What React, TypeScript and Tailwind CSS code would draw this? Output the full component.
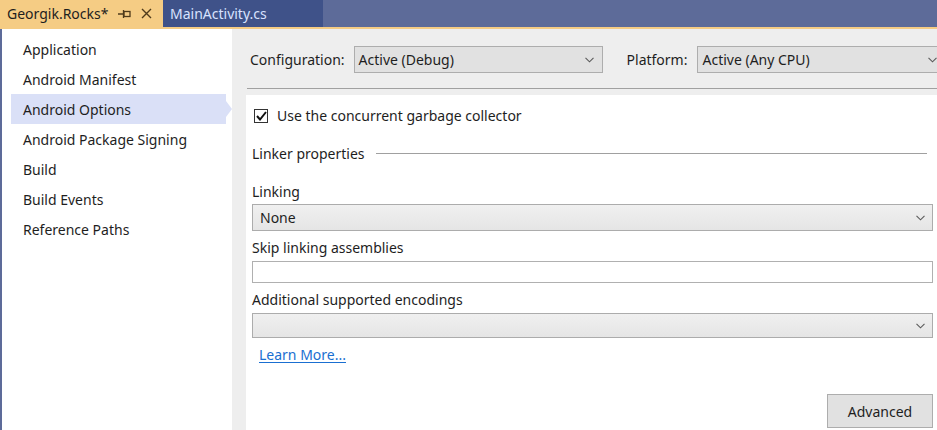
const navItems = [
    'Application',
    'Android Manifest',
    'Android Options',
    'Android Package Signing',
    'Build',
    'Build Events',
    'Reference Paths',
];

function Chevron() {
    return (
        <svg width="9" height="6" viewBox="0 0 9 6">
            <path d="M0.5 0.8 L4.5 4.8 L8.5 0.8" fill="none" stroke="#5a5a5a" strokeWidth="1.1" />
        </svg>
    );
}

export default function App() {
    return (
        <div
            className="flex h-[430px] w-[937px] flex-col overflow-hidden bg-white text-[14px] text-[#1e1e1e]"
            style={{ fontFamily: '"Noto Sans", "Open Sans", sans-serif' }}
        >
            {/* tab strip */}
            <div className="flex h-[27px] shrink-0 bg-[#5d6b99]">
                <div className="flex w-[163px] items-center bg-[#f5cc84] pl-[7px] text-[#1e1e1e]">
                    <span className="pb-[1px]">Georgik.Rocks*</span>
                    <svg width="14" height="10" viewBox="0 0 14 10" className="ml-[10px]">
                        <path d="M0 5 H5 M5.5 1 V9" stroke="#4f3b1b" strokeWidth="1.3" fill="none" />
                        <rect x="6" y="2.5" width="6" height="5" fill="none" stroke="#4f3b1b" strokeWidth="1.3" />
                    </svg>
                    <svg width="11" height="11" viewBox="0 0 11 11" className="ml-[9px]">
                        <path d="M1 1 L10 10 M10 1 L1 10" stroke="#4f3b1b" strokeWidth="1.4" />
                    </svg>
                </div>
                <div className="flex w-[160px] items-center bg-[#3f5289] pl-[7px] text-[#d8e2ff]">
                    <span className="pb-[1px]">MainActivity.cs</span>
                </div>
            </div>
            <div className="h-[2px] shrink-0 bg-[#f5cc84]" />

            <div className="flex min-h-0 flex-1">
                <div className="w-[2px] shrink-0 bg-[#5d6b99]" />

                {/* sidebar */}
                <div className="w-[230px] shrink-0 pt-[5px] pl-[9px]">
                    {navItems.map((item) => {
                        const active = item === 'Android Options';
                        return (
                            <div key={item} className="relative flex h-[30px] items-center">
                                <div
                                    className={`flex h-full w-[215px] items-center pl-[12px] ${active ? 'bg-[#dae0f7]' : ''}`}
                                >
                                    {item}
                                </div>
                                {active && (
                                    <div className="h-0 w-0 border-y-[8px] border-l-[6px] border-y-transparent border-l-[#dae0f7]" />
                                )}
                            </div>
                        );
                    })}
                </div>

                {/* main */}
                <div className="flex min-w-0 flex-1 flex-col bg-[#eeeeee]">
                    <div className="flex items-center pt-[17px] pl-[18px]">
                        <span className="shrink-0">Configuration:</span>
                        <div className="ml-[9px] flex h-[27px] w-[249px] shrink-0 items-center justify-between border border-[#adadad] bg-[#e1e1e1] pr-[8px] pl-[4px]">
                            <span>Active (Debug)</span>
                            <Chevron />
                        </div>
                        <span className="ml-[24px] shrink-0">Platform:</span>
                        <div className="ml-[10px] flex h-[27px] w-[249px] shrink-0 items-center justify-between border border-[#adadad] bg-[#e1e1e1] pr-[8px] pl-[4px]">
                            <span>Active (Any CPU)</span>
                            <Chevron />
                        </div>
                    </div>
                    <div className="mt-[15px] ml-[15px] h-[1px] bg-[#a0a0a0]" />

                    <div className="mt-[6px] ml-[14px] flex flex-1 flex-col bg-white pr-[4px] pl-[6px]">
                        <div className="mt-[10px] flex items-center pl-[2px]">
                            <div className="flex h-[14px] w-[14px] items-center justify-center border border-[#333333] bg-white">
                                <svg width="11" height="10" viewBox="0 0 11 10">
                                    <path d="M1 5 L4 8.5 L10 1" fill="none" stroke="#111111" strokeWidth="2" />
                                </svg>
                            </div>
                            <span className="ml-[9px]">Use the concurrent garbage collector</span>
                        </div>

                        <div className="mt-[17px] flex items-center">
                            <span>Linker properties</span>
                            <div className="mr-[6px] ml-[11px] h-[1px] flex-1 bg-[#a0a0a0]" />
                        </div>

                        <div className="mt-[18px] leading-[20px]">Linking</div>
                        <div className="mt-[2px] flex h-[27px] items-center justify-between border border-[#acacac] bg-gradient-to-b from-[#f0f0f0] to-[#e5e5e5] pr-[7px] pl-[7px]">
                            <span>None</span>
                            <Chevron />
                        </div>

                        <div className="mt-[7px] leading-[20px]">Skip linking assemblies</div>
                        <div className="mt-[3px] h-[22px] border border-[#b0b0b0] bg-white" />

                        <div className="mt-[7px] leading-[20px]">Additional supported encodings</div>
                        <div className="mt-[3px] flex h-[25px] items-center justify-end border border-[#acacac] bg-gradient-to-b from-[#f0f0f0] to-[#e5e5e5] pr-[7px]">
                            <Chevron />
                        </div>

                        <div className="mt-[6px] pl-[7px]">
                            <a className="text-[#1a6fd1] underline underline-offset-2">Learn More...</a>
                        </div>

                        <div className="mt-auto mb-[2px] flex justify-end">
                            <button className="h-[34px] w-[106px] border border-[#adadad] bg-[#e1e1e1] text-[#1e1e1e]">
                                Advanced
                            </button>
                        </div>
                    </div>
                </div>
            </div>
        </div>
    );
}
